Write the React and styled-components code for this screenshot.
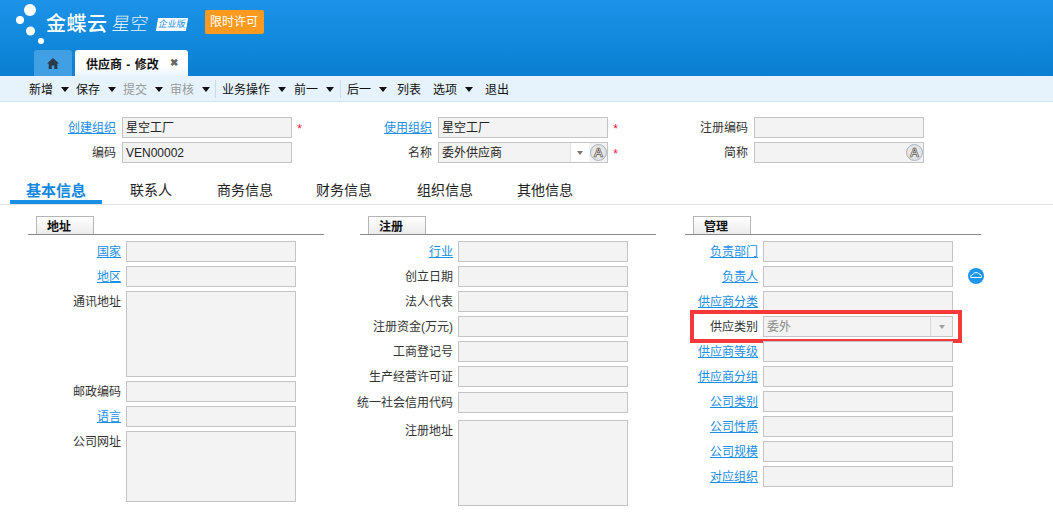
import styled, { createGlobalStyle } from "styled-components";

const GlobalStyle = createGlobalStyle`
  html, body {
    margin: 0;
    padding: 0;
    background: #fff;
    overflow: hidden;
  }
  body {
    font-family: "Liberation Sans", "Noto Sans CJK SC", sans-serif;
    font-size: 12px;
    color: #333;
  }
`;

const Page = styled.div`
  width: 1053px;
  height: 527px;
  overflow: hidden;
`;

const Header = styled.header`
  height: 76px;
  background: linear-gradient(#1c93e8, #0a7fd2);
  display: flex;
  flex-direction: column;
`;

const Brand = styled.div`
  height: 50px;
  display: flex;
  align-items: flex-start;
  padding-left: 15px;
`;

const BrandName = styled.span`
  color: #fff;
  font-size: 20px;
  font-weight: 500;
  line-height: 24px;
  margin: 12px 0 0 1px;
  letter-spacing: 0.5px;
`;

const BrandProduct = styled.span`
  color: #e2f2fd;
  font-size: 18px;
  font-weight: 300;
  line-height: 24px;
  margin: 12px 0 0 4px;
  transform: skewX(-8deg);
`;

const Edition = styled.span`
  background: #fff;
  color: #1c8fe0;
  font-size: 9px;
  line-height: 13px;
  height: 13px;
  width: 30px;
  text-align: center;
  margin: 18px 0 0 9px;
  transform: skewX(-10deg);
`;

const LicenseBadge = styled.span`
  background: #fb9a1e;
  color: #fff;
  font-size: 12px;
  line-height: 24px;
  height: 24px;
  width: 59px;
  text-align: center;
  border-radius: 2px;
  margin: 10px 0 0 18px;
`;

const TabStrip = styled.div`
  display: flex;
  gap: 3px;
  padding-left: 34px;
  height: 26px;
`;

const HomeTab = styled.div`
  width: 38px;
  background: #419fe3;
  border-radius: 3px 3px 0 0;
  display: flex;
  align-items: center;
  justify-content: center;
`;

const PageTab = styled.div`
  width: 113px;
  background: linear-gradient(#fff 60%, #eaf4fb);
  border-radius: 3px 3px 0 0;
  display: flex;
  align-items: center;
  padding-left: 11px;
  box-sizing: border-box;
  font-size: 12px;
  font-weight: 700;
  word-spacing: 1px;
  color: #111;
`;

const CloseMark = styled.span`
  margin-left: 11px;
  color: #666;
  font-size: 10px;
  line-height: 1;
`;

const Toolbar = styled.nav`
  height: 26px;
  box-sizing: border-box;
  padding: 3px 0 0 29px;
  background: #e6f3fc;
  border-bottom: 1px solid #cfe3f8;
  display: flex;
  align-items: center;
`;

const ToolItem = styled.span`
  display: flex;
  align-items: center;
  width: ${(p) => p.$width}px;
  flex: none;
  color: ${(p) => (p.$disabled ? "#999" : "#111")};
  font-size: 12px;
  line-height: 22px;
`;

const Caret = styled.i`
  width: 0;
  height: 0;
  margin: 0 0 2px 8px;
  border-left: 4px solid transparent;
  border-right: 4px solid transparent;
  border-top: 5px solid #111;
`;

const ToolDivider = styled.span`
  width: 1px;
  height: 18px;
  background: #cdd9e3;
  margin: 0 6px 3px 0;
  flex: none;
`;

const TopForm = styled.section`
  display: grid;
  grid-template-columns: repeat(3, 316px);
  grid-auto-rows: 25px;
  padding-top: 15px;
  height: 53px;
`;

const Field = styled.div`
  position: relative;
  height: 21px;
  display: flex;
  align-items: flex-start;
  width: max-content;
`;

const Label = styled.label`
  width: ${(p) => p.$width}px;
  margin-right: ${(p) => p.$gap}px;
  flex: none;
  display: flex;
  justify-content: flex-end;
  white-space: nowrap;
  line-height: 22px;
  font-size: 12px;
  color: #333;
`;

const LinkLabel = styled(Label)`
  color: #1b8ee6;
  text-decoration: underline;
`;

const Control = styled.div`
  width: ${(p) => p.$width || 170}px;
  height: ${(p) => p.$height || 21}px;
  box-sizing: border-box;
  background: #f3f3f3;
  border: 1px solid #c4c4c4;
  color: ${(p) => (p.$muted ? "#888" : "#222")};
  padding-left: 3px;
  font-size: 12px;
  line-height: 21px;
  display: flex;
  align-items: flex-start;
`;

const ControlText = styled.span`
  flex: 1;
`;

const ArrowBox = styled.span`
  width: 19px;
  height: 19px;
  background: #fff;
  border-left: 1px solid #e2e2e2;
  display: flex;
  align-items: center;
  justify-content: center;
  box-sizing: border-box;
`;

const PlainArrowBox = styled(ArrowBox)`
  width: 22px;
  background: transparent;
  border-left-color: #d8d8d8;
`;

const SmallCaret = styled.i`
  width: 0;
  height: 0;
  border-left: 3.500px solid transparent;
  border-right: 3.500px solid transparent;
  border-top: 4px solid ${(p) => (p.$faint ? "#a0a0a0" : "#777")};
`;

const Required = styled.span`
  position: absolute;
  right: -10px;
  top: 6px;
  color: #f0142f;
  font-size: 12px;
  line-height: 12px;
`;

const LangButton = styled.span`
  width: 17px;
  height: 17px;
  margin: 1px 0 0 1px;
  flex: none;
  box-sizing: border-box;
  border: 1px solid #aab4bf;
  border-radius: 50%;
  background: radial-gradient(#f8f4ee, #d3d8dd);
  color: #f6e9dc;
  -webkit-text-stroke: 0.700px #555;
  font-size: 13px;
  font-weight: 700;
  line-height: 15px;
  text-align: center;
`;

const TabBar = styled.div`
  margin-top: 11px;
  height: 23px;
  padding-left: 10px;
  border-bottom: 1px solid #e0e0e0;
  display: flex;
  align-items: stretch;
`;

const FormTab = styled.div`
  box-sizing: border-box;
  width: ${(p) => p.$width}px;
  flex: none;
  height: 23px;
  font-size: ${(p) => (p.$active ? 15 : 14)}px;
  font-weight: ${(p) => (p.$active ? 700 : 400)};
  line-height: 19px;
  text-align: center;
  color: ${(p) => (p.$active ? "#1187dd" : "#222")};
  border-bottom: ${(p) => (p.$active ? "4px solid #1b8ee6" : "none")};
`;

const Sections = styled.div`
  display: grid;
  grid-template-columns: 332px 325px 296px;
  padding: 11px 0 0 28px;
`;

const Section = styled.section`
  width: 296px;
`;

const SectionHead = styled.div`
  height: 18px;
  border-bottom: 1px solid #888;
  padding-left: 8px;
  margin-bottom: 6px;
`;

const SectionTitle = styled.h3`
  margin: 0;
  box-sizing: border-box;
  width: 58px;
  height: 18px;
  border: 1px solid #b5b5b5;
  border-bottom: none;
  background: linear-gradient(#fff, #ececec);
  font-size: 12px;
  font-weight: 700;
  line-height: 20px;
  padding-left: 10px;
  color: #111;
  overflow: hidden;
`;

const Rows = styled.div`
  display: flex;
  flex-direction: column;
  gap: 4px;
`;

const RowField = styled(Field)`
  height: ${(p) => p.$height || 21}px;
  margin-top: ${(p) => p.$offset || 0}px;
`;

const Highlight = styled.span`
  position: absolute;
  left: 5px;
  top: -6px;
  width: 272px;
  height: 33px;
  box-sizing: border-box;
  border: 4px solid #f5393b;
  pointer-events: none;
`;

const CloudButton = styled.span`
  position: absolute;
  left: 283px;
  top: 2px;
  width: 16px;
  height: 16px;
`;

function Row({ label, link, width = 93, controlWidth, height, offset, children }) {
  const Text = link ? LinkLabel : Label;
  return (
    <RowField $height={height} $offset={offset}>
      <Text $width={width} $gap={5}>
        {label}
      </Text>
      <Control $height={height} $width={controlWidth}>
        {children}
      </Control>
    </RowField>
  );
}

function Logo() {
  return (
    <svg width="30" height="46" viewBox="0 0 30 46" style={{ flex: "none" }}>
      <circle cx="15" cy="10" r="6" fill="#fff" />
      <circle cx="5" cy="20" r="4" fill="#fff" />
      <circle cx="15.500" cy="31" r="4.500" fill="#fff" />
      <circle cx="26" cy="41" r="3" fill="#fff" />
    </svg>
  );
}

function HomeIcon() {
  return (
    <svg width="12" height="11" viewBox="0 0 12 11">
      <path d="M6 0 L12 5.500 L10.300 5.500 L10.300 11 L7.300 11 L7.300 7.500 L4.700 7.500 L4.700 11 L1.700 11 L1.700 5.500 L0 5.500 Z" fill="#2a3a48" />
    </svg>
  );
}

function CloudIcon() {
  return (
    <svg width="16" height="16" viewBox="0 0 16 16">
      <circle cx="8" cy="8" r="8" fill="#1b97ee" />
      <path d="M2.500 9 C3 7 4 6.500 5 6.500 C6 4 10 4 11 6 C12.500 6 13.500 7 13.500 9" fill="none" stroke="#fff" strokeWidth="1" />
      <path d="M2.500 9.500 H13.500" stroke="#fff" strokeWidth="1" />
    </svg>
  );
}

const toolItems = [
  { label: "新增", width: 47, caret: true },
  { label: "保存", width: 47, caret: true },
  { label: "提交", width: 47, caret: true, disabled: true },
  { label: "审核", width: 45, caret: true, disabled: true, divider: true },
  { label: "业务操作", width: 72, caret: true },
  { label: "前一", width: 46, caret: true, divider: true },
  { label: "后一", width: 50, caret: true },
  { label: "列表", width: 36 },
  { label: "选项", width: 52, caret: true },
  { label: "退出", width: 30 },
];

const formTabs = [
  { label: "基本信息", width: 92, active: true },
  { label: "联系人", width: 98 },
  { label: "商务信息", width: 90 },
  { label: "财务信息", width: 108 },
  { label: "组织信息", width: 94 },
  { label: "其他信息", width: 106 },
];

export default function App() {
  return (
    <Page>
      <GlobalStyle />
      <Header>
        <Brand>
          <Logo />
          <BrandName>金蝶云</BrandName>
          <BrandProduct>星空</BrandProduct>
          <Edition>企业版</Edition>
          <LicenseBadge>限时许可</LicenseBadge>
        </Brand>
        <TabStrip>
          <HomeTab>
            <HomeIcon />
          </HomeTab>
          <PageTab>
            供应商 - 修改
            <CloseMark>✖</CloseMark>
          </PageTab>
        </TabStrip>
      </Header>

      <Toolbar>
        {toolItems.map((item) => (
          <span key={item.label} style={{ display: "contents" }}>
            <ToolItem $width={item.width} $disabled={item.disabled}>
              {item.label}
              {item.caret && <Caret />}
            </ToolItem>
            {item.divider && <ToolDivider />}
          </span>
        ))}
      </Toolbar>

      <TopForm>
        <Field>
          <LinkLabel $width={116} $gap={6}>创建组织</LinkLabel>
          <Control>星空工厂</Control>
          <Required>*</Required>
        </Field>
        <Field>
          <LinkLabel $width={116} $gap={6}>使用组织</LinkLabel>
          <Control>星空工厂</Control>
          <Required>*</Required>
        </Field>
        <Field>
          <Label $width={116} $gap={6}>注册编码</Label>
          <Control />
        </Field>
        <Field>
          <Label $width={116} $gap={6}>编码</Label>
          <Control>VEN00002</Control>
        </Field>
        <Field>
          <Label $width={116} $gap={6}>名称</Label>
          <Control>
            <ControlText>委外供应商</ControlText>
            <ArrowBox><SmallCaret /></ArrowBox>
            <LangButton>A</LangButton>
          </Control>
          <Required>*</Required>
        </Field>
        <Field>
          <Label $width={116} $gap={6}>简称</Label>
          <Control>
            <ControlText />
            <LangButton>A</LangButton>
          </Control>
        </Field>
      </TopForm>

      <TabBar>
        {formTabs.map((tab) => (
          <FormTab key={tab.label} $width={tab.width} $active={tab.active}>
            {tab.label}
          </FormTab>
        ))}
      </TabBar>

      <Sections>
        <Section>
          <SectionHead><SectionTitle>地址</SectionTitle></SectionHead>
          <Rows>
            <Row label="国家" link />
            <Row label="地区" link />
            <Row label="通讯地址" height={86} />
            <Row label="邮政编码" />
            <Row label="语言" link />
            <Row label="公司网址" height={71} />
          </Rows>
        </Section>

        <Section>
          <SectionHead><SectionTitle>注册</SectionTitle></SectionHead>
          <Rows>
            <Row label="行业" link />
            <Row label="创立日期" />
            <Row label="法人代表" />
            <Row label="注册资金(万元)" />
            <Row label="工商登记号" />
            <Row label="生产经营许可证" />
            <Row label="统一社会信用代码" offset={1} />
            <Row label="注册地址" height={86} offset={3} />
          </Rows>
        </Section>

        <Section>
          <SectionHead><SectionTitle>管理</SectionTitle></SectionHead>
          <Rows>
            <Row label="负责部门" link width={73} controlWidth={190} />
            <RowField>
              <LinkLabel $width={73} $gap={5}>负责人</LinkLabel>
              <Control $width={190} />
              <CloudButton><CloudIcon /></CloudButton>
            </RowField>
            <Row label="供应商分类" link width={73} controlWidth={190} />
            <RowField>
              <Label $width={73} $gap={5}>供应类别</Label>
              <Control $muted $width={190}>
                <ControlText>委外</ControlText>
                <PlainArrowBox><SmallCaret $faint /></PlainArrowBox>
              </Control>
              <Highlight />
            </RowField>
            <Row label="供应商等级" link width={73} controlWidth={190} />
            <Row label="供应商分组" link width={73} controlWidth={190} />
            <Row label="公司类别" link width={73} controlWidth={190} />
            <Row label="公司性质" link width={73} controlWidth={190} />
            <Row label="公司规模" link width={73} controlWidth={190} />
            <Row label="对应组织" link width={73} controlWidth={190} />
          </Rows>
        </Section>
      </Sections>
    </Page>
  );
}
